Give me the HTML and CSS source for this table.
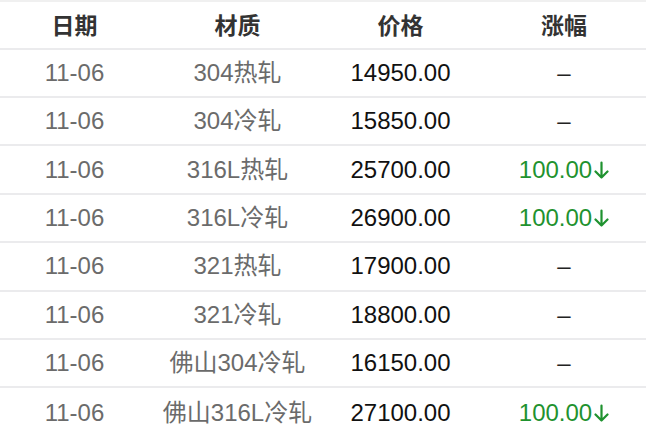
FILE: index.html
```html
<!DOCTYPE html>
<html lang="zh-CN">
<head>
<meta charset="utf-8">
<link rel="stylesheet" href="styles.css">
</head>
<body>
<div class="table">
  <div class="row head">
    <div class="cell c1">日期</div>
    <div class="cell">材质</div>
    <div class="cell">价格</div>
    <div class="cell">涨幅</div>
  </div>
  <div class="row">
    <div class="cell c1 date">11-06</div>
    <div class="cell mat">304热轧</div>
    <div class="cell price">14950.00</div>
    <div class="cell dash">–</div>
  </div>
  <div class="row">
    <div class="cell c1 date">11-06</div>
    <div class="cell mat">304冷轧</div>
    <div class="cell price">15850.00</div>
    <div class="cell dash">–</div>
  </div>
  <div class="row">
    <div class="cell c1 date">11-06</div>
    <div class="cell mat">316L热轧</div>
    <div class="cell price">25700.00</div>
    <div class="cell down">100.00<svg class="arrow" width="15" height="18" viewBox="0 0 15 18"><path d="M7.5 1.5V16.5M1.5 10.5L7.5 16.5L13.5 10.5"/></svg></div>
  </div>
  <div class="row">
    <div class="cell c1 date">11-06</div>
    <div class="cell mat">316L冷轧</div>
    <div class="cell price">26900.00</div>
    <div class="cell down">100.00<svg class="arrow" width="15" height="18" viewBox="0 0 15 18"><path d="M7.5 1.5V16.5M1.5 10.5L7.5 16.5L13.5 10.5"/></svg></div>
  </div>
  <div class="row">
    <div class="cell c1 date">11-06</div>
    <div class="cell mat">321热轧</div>
    <div class="cell price">17900.00</div>
    <div class="cell dash">–</div>
  </div>
  <div class="row">
    <div class="cell c1 date">11-06</div>
    <div class="cell mat">321冷轧</div>
    <div class="cell price">18800.00</div>
    <div class="cell dash">–</div>
  </div>
  <div class="row">
    <div class="cell c1 date">11-06</div>
    <div class="cell mat">佛山304冷轧</div>
    <div class="cell price">16150.00</div>
    <div class="cell dash">–</div>
  </div>
  <div class="row last">
    <div class="cell c1 date">11-06</div>
    <div class="cell mat">佛山316L冷轧</div>
    <div class="cell price">27100.00</div>
    <div class="cell down">100.00<svg class="arrow" width="15" height="18" viewBox="0 0 15 18"><path d="M7.5 1.5V16.5M1.5 10.5L7.5 16.5L13.5 10.5"/></svg></div>
  </div>
</div>
</body>
</html>
```

FILE: styles.css
```css
html, body {
  margin: 0;
  padding: 0;
  background: #ffffff;
}
body {
  font-family: "Liberation Sans", "Noto Sans CJK SC", sans-serif;
  font-size: 24px;
  color: #111;
  overflow: hidden;
}
.table {
  width: 646px;
  border-top: 2px solid #f0f0f0;
}
.row {
  display: grid;
  grid-template-columns: 156px 163px 163px 164px;
  align-items: center;
  height: 48.4px;
  box-sizing: border-box;
  border-bottom: 2px solid #ebebed;
}
.row.head {
  height: 47.6px;
}
.row.last {
  border-bottom: none;
}
.cell {
  display: flex;
  justify-content: center;
  align-items: center;
  white-space: nowrap;
  line-height: 1;
}
.c1 {
  padding-right: 7px;
}
.head .cell {
  font-weight: bold;
  color: #333;
  font-family: "Noto Sans CJK SC", sans-serif;
  font-size: 23px;
}
.date {
  color: #6b6b6b;
}
.mat {
  color: #6b6b6b;
}
.price {
  color: #111;
}
.dash {
  color: #222;
}
.down {
  color: #1f922f;
}
.arrow {
  display: block;
  flex-shrink: 0;
  width: 15px;
  height: 18px;
  margin-left: 2px;
  fill: none;
  stroke: #1f922f;
  stroke-width: 2.2;
  stroke-linecap: round;
  stroke-linejoin: round;
}
```
